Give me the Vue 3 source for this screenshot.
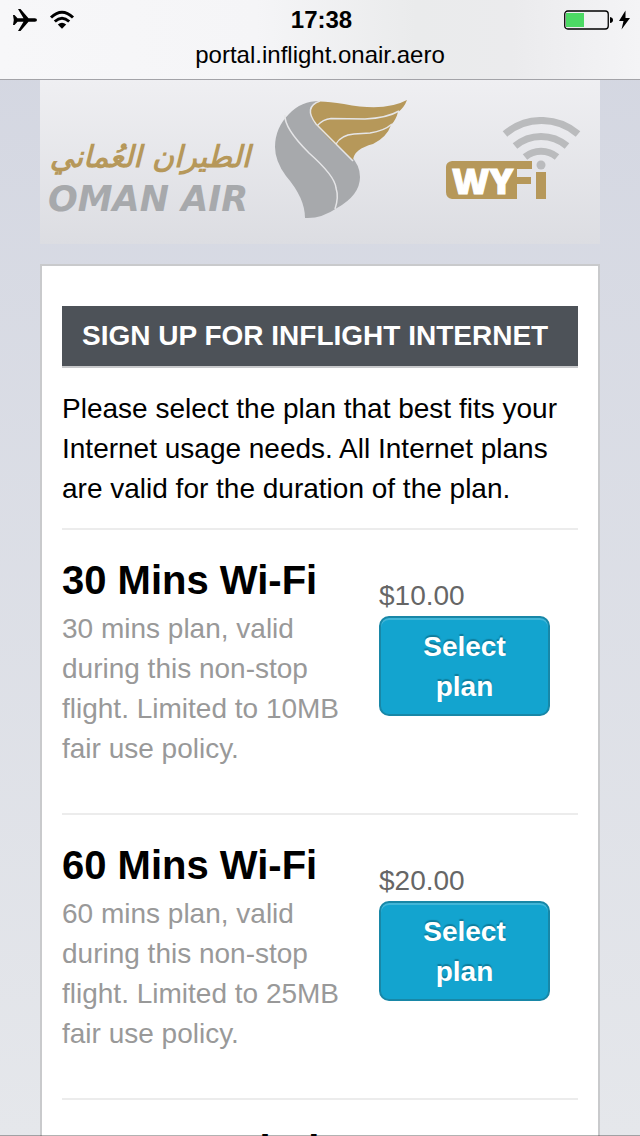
<script setup>
const plans = [
  { id: 'm30', name: '30 Mins Wi-Fi', text: '30 mins plan, valid during this non-stop flight. Limited to 10MB fair use policy.', price: '$10.00' },
  { id: 'm60', name: '60 Mins Wi-Fi', text: '60 mins plan, valid during this non-stop flight. Limited to 25MB fair use policy.', price: '$20.00' },
]
</script>

<template>
  <div class="screen">
    <header class="browser-bar">
      <div class="status">
        <div class="status-left">
          <svg viewBox="0 0 24 22" width="24" height="22" aria-label="Airplane mode">
            <path d="M0 6h1.500l3 3.300h6L5 0h2.500l8 9.300h6.300q2.200.2 2.200 1.700t-2.200 1.700h-6.300l-8 9.300H5l5.500-9.300h-6l-3 3.300H0l.8-5z" />
          </svg>
          <svg viewBox="0 0 26 20" width="26" height="20" aria-label="Wi-Fi signal">
            <path d="M2 7.500Q13-3 24 7.500M5.800 11.500q7.200-6.500 14.400 0" fill="none" stroke="#000" stroke-width="3" />
            <path d="M8.800 14.500q4.200-3.500 8.400 0L13 18.700z" />
          </svg>
        </div>
        <time class="clock">17:38</time>
        <div class="status-right">
          <svg viewBox="0 0 66 22" width="66" height="22" aria-label="Battery charging">
            <rect x=".75" y="2" width="43.500" height="18" rx="3" fill="none" stroke="#000" stroke-width="1.300" />
            <rect x="2" y="4" width="18" height="14" fill="#4cd964" />
            <path d="M46 8q3 .5 3 3t-3 3z" />
            <path d="M61.500 1.500L55 12h4.500l-2 8.500L66 9h-4.500z" />
          </svg>
        </div>
      </div>
      <a class="address" href="#">portal.inflight.onair.aero</a>
    </header>

    <main class="page">
      <div class="brand">
        <div class="wordmark">
          <span class="arabic" lang="ar" dir="rtl">الطيران العُماني</span>
          <span class="latin">OMAN AIR</span>
        </div>
        <svg class="wing" viewBox="0 0 136 120" width="136" height="120" aria-hidden="true">
          <path fill="#a7a9ac" d="M46 1Q27 1 15 14Q1 28 1 47Q1 61 12 76Q31 98 31 118Q47 119 63 108Q86 95 86 77Q86 65 76 55L42 24Q34 10 46 1Z" />
          <path fill="#b6985a" d="M43 1.500Q53 1 70 4Q111 12 133 0Q130 8 124 12Q122 20 117 25Q113 37 99 44Q80 49 79 60Q69 50 57 41L41 24Q31 11 43 1.500Z" />
          <path fill="none" stroke="#e5e5e7" stroke-width="1.500" d="M11 15Q10 28 35 53Q61 76 62 88Q65 97 61 109M46 1Q29 7 42 24L79 61M43 26Q49 19 57 18.500L91 19Q113 18 125 11M62 44Q67 35 80 34L96 33Q110 31 118 24" />
        </svg>
        <svg class="wyfi" viewBox="0 0 140 100" width="140" height="100" aria-label="WYFi">
          <g fill="none" stroke="#babbbd" stroke-width="7">
            <path d="M61 17A56 56 0 0 1 134 17M71 29A40 40 0 0 1 123 29M81 40A25 25 0 0 1 113 40" />
          </g>
          <path fill="#b6985a" d="M8 44H88v8H73v8h14v7H73v15H8q-6-1-6-7V50q0-5 6-6z" />
          <path fill="#b6985a" d="M92 55h10v27H92z" />
          <circle cx="97" cy="48" r="4.500" fill="#babbbd" />
          <text x="8" y="77" class="wy">WY</text>
        </svg>
      </div>

      <section class="panel">
        <h1>SIGN UP FOR INFLIGHT INTERNET</h1>
        <p class="intro">Please select the plan that best fits your Internet usage needs. All Internet plans are valid for the duration of the plan.</p>
        <article v-for="plan in plans" :key="plan.id" class="plan">
          <div class="details">
            <h2>{{ plan.name }}</h2>
            <p>{{ plan.text }}</p>
          </div>
          <div class="purchase">
            <span class="price">{{ plan.price }}</span>
            <button type="button">Select plan</button>
          </div>
        </article>
        <article class="plan">
          <div class="details"><h2>3 Hours Wi-Fi</h2></div>
        </article>
      </section>
    </main>
  </div>
</template>

<style>
body {
  background: #dee0e6;
}
</style>

<style scoped>
.screen {
  position: relative;
  height: 100vh;
  overflow: hidden;
  display: flex;
  flex-direction: column;
  background: linear-gradient(#d3d6e1, #e5e7eb);
  color: #000;
  font-family: "Liberation Sans", Arial, sans-serif;
}
.screen::after {
  content: "";
  position: absolute;
  left: 0;
  right: 0;
  bottom: 0;
  height: 1px;
  background: rgba(0, 0, 0, 0.3);
}
.browser-bar {
  flex: none;
  height: 79px;
  border-bottom: 1px solid #a3a3a8;
  background: linear-gradient(90deg, #f7f7f9 0%, #f5f5f7 40%, #eaebec 65%, #ebebed 80%, #f4f4f6 100%);
}
.status {
  display: grid;
  grid-template-columns: 1fr auto 1fr;
  align-items: center;
  height: 40px;
  padding: 0 10px 0 13px;
}
.status-left {
  display: flex;
  align-items: center;
  gap: 12px;
}
.status-right {
  display: flex;
  justify-content: flex-end;
}
.clock {
  font-size: 24px;
  line-height: 40px;
  font-weight: bold;
}
.address {
  display: block;
  color: #000;
  font-size: 24px;
  line-height: 30px;
  text-align: center;
  text-decoration: none;
}
.page {
  flex: 1;
  min-height: 0;
  padding: 0 40px;
}
.brand {
  display: flex;
  align-items: flex-start;
  height: 164px;
  background: linear-gradient(#efeff2, #dcdde2);
}
.wordmark {
  flex: none;
  width: 202px;
  padding: 55px 0 0 8px;
  font-family: "DejaVu Sans", sans-serif;
  font-weight: bold;
  font-style: italic;
  white-space: nowrap;
}
.arabic {
  display: block;
  color: #b6985a;
  font-size: 30px;
  line-height: 44px;
}
.latin {
  display: block;
  color: #a7a9ac;
  font-size: 35px;
  line-height: 40px;
}
.wing {
  flex: none;
  margin: 20px 0 0 24px;
}
.wyfi {
  flex: none;
  margin: 37px 16px 0 auto;
}
.wy {
  fill: #fff;
  stroke: #fff;
  stroke-width: 1px;
  font: 800 36px "Open Sans", sans-serif;
}
.panel {
  margin-top: 20px;
  padding: 40px 20px;
  border: 2px solid #c9cacc;
  background: #fff;
}
h1 {
  margin: 0;
  padding: 0 20px;
  border-bottom: 2px solid #c8c9cb;
  background: #4d5258;
  color: #fff;
  font-size: 28px;
  line-height: 60px;
  white-space: nowrap;
}
.intro {
  margin: 21px 0 19px;
  font-size: 28px;
  line-height: 40px;
}
.plan {
  display: flex;
  gap: 25px;
  min-height: 283px;
  border-top: 2px solid #ececec;
}
.details {
  flex: 0 1 292px;
}
h2 {
  margin: 26px 0 0;
  font-size: 40px;
  line-height: 48px;
  white-space: nowrap;
}
.details p {
  margin: 5px 0 0;
  color: #999;
  font-size: 28px;
  line-height: 40px;
}
.purchase {
  display: flex;
  flex-direction: column;
  flex: 0 1 171px;
  padding-top: 46px;
}
.price {
  color: #666;
  font-size: 28px;
  line-height: 40px;
}
button {
  height: 100px;
  padding: 2px 36px 0;
  border: 2px solid #1887a7;
  border-radius: 10px;
  background: #13a4cf;
  box-shadow: inset 0 2px #42b6d8;
  color: #fff;
  font-family: inherit;
  font-size: 28px;
  font-weight: bold;
  line-height: 40px;
  text-shadow: 0 -2px 1px #0e7c9c;
}
</style>
